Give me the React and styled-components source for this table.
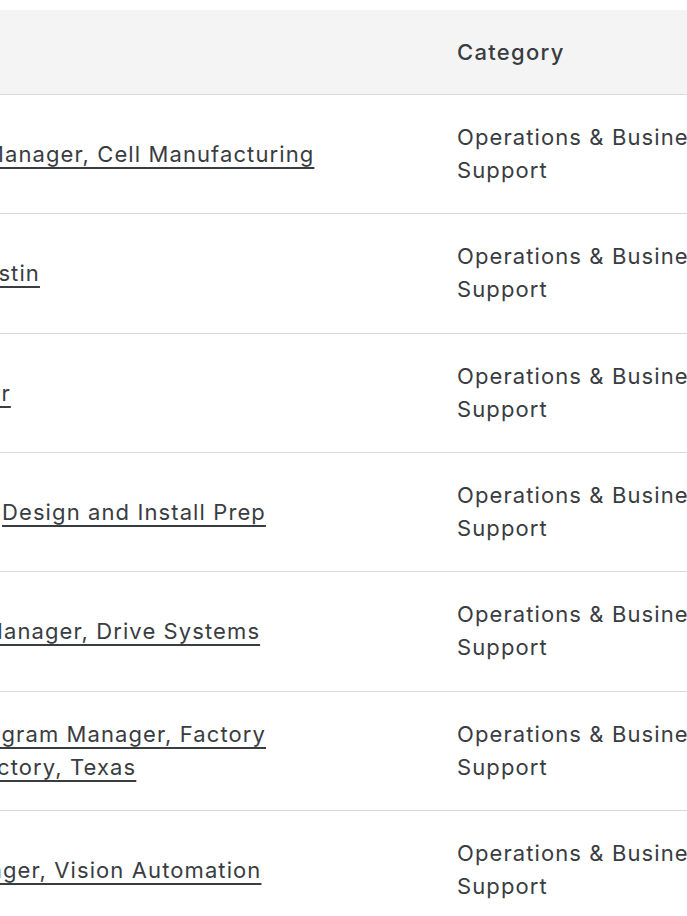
import React from "react";
import styled, { createGlobalStyle } from "styled-components";

const GlobalStyle = createGlobalStyle`
  html, body {
    margin: 0;
    padding: 0;
    background: #fff;
    overflow-x: hidden;
  }
  body {
    font-family: "Inter", "Liberation Sans", sans-serif;
    color: #393c41;
  }
`;

const jobs = [
  { lines: [{ text: "Manager, Cell Manufacturing", shift: 16 }] },
  { lines: [{ text: "Austin", shift: 32 }] },
  { lines: [{ text: "Supervisor", shift: 113 }] },
  { lines: [{ text: "Design and Install Prep", shift: -2 }] },
  { lines: [{ text: "Manager, Drive Systems", shift: 17 }] },
  {
    lines: [
      { text: "Program Manager, Factory", shift: 37 },
      { text: "Factory, Texas", shift: 30 },
    ],
  },
  { lines: [{ text: "Manager, Vision Automation", shift: 59 }] },
];

export default function App() {
  return (
    <React.Fragment>
      <GlobalStyle />
      <Page>
        <Table>
          <HeaderRow>
            <HeaderCell />
            <HeaderCell>Category</HeaderCell>
          </HeaderRow>
          {jobs.map((job, i) => (
            <Row key={i}>
              <TitleCell>
                {job.lines.map((line) => (
                  <TitleLine key={line.text} shift={line.shift}>
                    <a href="#">{line.text}</a>
                  </TitleLine>
                ))}
              </TitleCell>
              <CategoryCell>Operations &amp; Business Support</CategoryCell>
            </Row>
          ))}
        </Table>
      </Page>
    </React.Fragment>
  );
}

const Page = styled.div`
  padding-top: 10px;
  width: 687px;
  height: 916px;
  overflow: hidden;
`;

const Table = styled.div`
  display: flex;
  flex-direction: column;
  width: 760px;
  font-size: 22px;
  letter-spacing: 1.1px;
  line-height: 33px;
`;

const HeaderRow = styled.div`
  display: grid;
  grid-template-columns: 457px 300px;
  align-items: center;
  height: 85px;
  background: #f4f4f4;
  border-bottom: 1.5px solid #d9d9d9;
  box-sizing: border-box;
  color: #393c41;
  font-weight: 500;
`;

const HeaderCell = styled.div`
  padding-top: 1px;
  letter-spacing: 1.3px;
`;

const Row = styled.div`
  display: grid;
  grid-template-columns: 457px 300px;
  align-items: center;
  height: 119.33px;
  border-bottom: 1.5px solid #d9d9d9;
  box-sizing: border-box;
`;

const TitleCell = styled.div`
  display: flex;
  flex-direction: column;
  padding-top: 1px;
  white-space: nowrap;
`;

const TitleLine = styled.div`
  margin-left: ${(props) => -props.shift}px;
  > a {
    color: #393c41;
    text-decoration: underline;
    text-decoration-thickness: 1.5px;
    text-underline-offset: 5px;
  }
`;

const CategoryCell = styled.div`
  color: #393c41;
`;
